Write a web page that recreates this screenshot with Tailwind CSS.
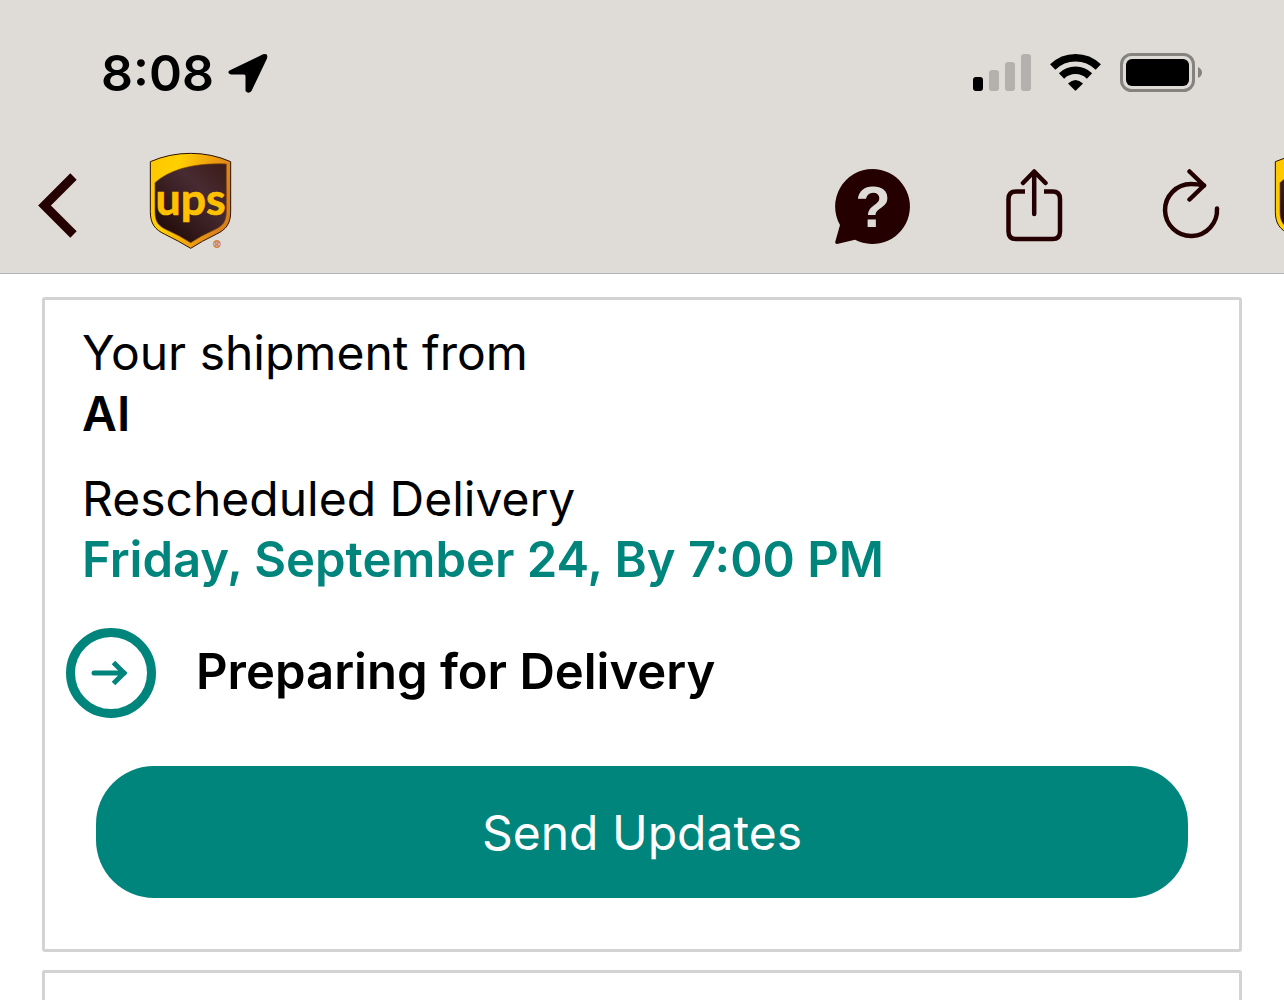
<!DOCTYPE html>
<html lang="en">
<head>
    <meta charset="UTF-8">
    <meta name="viewport" content="width=device-width, initial-scale=1.0">
    <title>UPS Tracking</title>
    <script src="https://cdn.jsdelivr.net/npm/@tailwindcss/browser@4"></script>
</head>
<body class="bg-white text-black font-['Inter',sans-serif] text-[48px] leading-[61px] overflow-x-hidden">
    <header class="bg-[#dfdcd8] border-b border-[#b2b4b8] overflow-hidden">
        <!-- status bar -->
        <div class="flex items-center justify-between h-[146px] pl-[101px] pr-[82px]">
            <div class="flex items-center gap-[13px]">
                <span class="text-[50px] font-semibold">8:08</span>
                <svg class="w-[42px] h-[42px]" viewBox="0 0 42 42" aria-hidden="true">
                    <path d="M2.500 18.500 L36 2.300 Q41.500 0.500 40 6.500 L24.500 39 Q21.500 42.500 18.500 39 V24 Q18.500 22.500 17 22.500 H4 Q-0.500 21 2.500 18.500Z"/>
                </svg>
            </div>
            <div class="flex items-center gap-[19px]">
                <svg class="w-[58px] h-[40px]" viewBox="0 0 58 40" aria-hidden="true">
                    <rect x="0" y="24" width="10" height="14" rx="3"/>
                    <g fill="#b3b0ad">
                        <rect x="16" y="17" width="10" height="21" rx="3"/>
                        <rect x="32" y="9" width="10" height="29" rx="3"/>
                        <rect x="48" y="1" width="10" height="37" rx="3"/>
                    </g>
                </svg>
                <svg class="w-[51px] h-[40px]" viewBox="0 0 51 40" aria-hidden="true">
                    <g fill="none" stroke="#000" stroke-width="7.500">
                        <path d="M2.700 14 A32.500 32.500 0 0 1 48.300 14"/>
                        <path d="M11.500 23 A20 20 0 0 1 39.500 23"/>
                    </g>
                    <path d="M18 30.500 Q25.500 23.500 33 30.500 L26.200 37.300 Q25.500 38 24.800 37.300Z"/>
                </svg>
                <svg class="w-[82px] h-10" viewBox="0 1 82 40" aria-hidden="true">
                    <rect x="1.500" y="2.500" width="72" height="36" rx="10" fill="none" stroke="#858380" stroke-width="3"/>
                    <rect x="6" y="7" width="63" height="27" rx="6"/>
                    <path d="M78 15 Q82 17 82 20.500 Q82 24 78 26Z" fill="#858380"/>
                </svg>
            </div>
        </div>

        <!-- toolbar -->
        <nav class="flex justify-between h-[127px] pl-[37px]">
            <div class="flex">
                <button type="button" aria-label="Back" class="w-[40px] h-[120px]">
                    <svg class="w-[40px] h-[66px]" viewBox="0 0 40 66" fill="none" stroke="#240000" stroke-width="9">
                        <path d="M36.500 3.500 L7.500 32.500 L36.500 61.500"/>
                    </svg>
                </button>
                <a href="#" aria-label="UPS home" class="ml-[72px] mt-[6px] h-[98px]">
                    <svg class="w-[84px] h-[98px]" viewBox="387 36 252 294">
                        <defs>
                            <linearGradient id="gold" x1="0" y1="0" x2="1" y2="0.300">
                                <stop offset="0" stop-color="#ffc600"/>
                                <stop offset="0.350" stop-color="#ffd000"/>
                                <stop offset="0.750" stop-color="#ee9c10"/>
                                <stop offset="1" stop-color="#d97f1c"/>
                            </linearGradient>
                            <linearGradient id="brown" x1="1" y1="0" x2="0.200" y2="0.900">
                                <stop offset="0" stop-color="#3d1c18"/>
                                <stop offset="0.400" stop-color="#472b32"/>
                                <stop offset="1" stop-color="#250d0b"/>
                            </linearGradient>
                        </defs>
                        <path d="M391 65 Q448 40 512 40 Q575 40 632 65 V215 C632 252 617 269 590 282 Q544 304 512 325 Q478 304 433 282 C406 269 391 252 391 215Z" fill="url(#gold)" stroke="#2a1005" stroke-width="3"/>
                        <path d="M405 128 C450 88 525 68 619 72 V215 C619 248 605 259 582 270 Q542 288 512 308 Q481 288 441 270 C418 259 405 248 405 215Z" fill="url(#brown)" stroke="#7a4a0c" stroke-width="2"/>
                        <text x="512" y="226" text-anchor="middle" fill="#ffc000" stroke="#ffc000" stroke-width="2" class="font-['Lato',sans-serif] font-bold text-[134px]">ups</text>
                        <text x="591" y="323" text-anchor="middle" fill="#cf7a26" stroke="#cf7a26" class="font-['Liberation_Sans',sans-serif] font-bold text-[30px]">®</text>
                    </svg>
                </a>
            </div>
            <div class="flex w-[449px] shrink-0 overflow-hidden">
                <button type="button" aria-label="Help" class="w-[76px] shrink-0 h-[120px]">
                    <svg class="w-[76px] h-[86px]" viewBox="0 -6 76 86">
                        <path d="M37.500 0 A37.500 37.500 0 1 1 20 70.700 L2 75 Q0 75 0.200 73 L5 56 A37.500 37.500 0 0 1 37.500 0Z" fill="#240000"/>
                        <text x="38" y="58" text-anchor="middle" fill="#dfdcd8" class="font-['Liberation_Sans',sans-serif] font-bold text-[58px]">?</text>
                    </svg>
                </button>
                <button type="button" aria-label="Share" class="w-[58px] shrink-0 h-[120px] ml-[95px]">
                    <svg class="w-[58px] h-[74px]" viewBox="0 0 58 74" fill="none" stroke="#240000" stroke-width="4.500">
                        <path d="M19 22.500 H10 Q2.500 22.500 2.500 30 V62.500 Q2.500 70 10 70 H46.500 Q54 70 54 62.500 V30 Q54 22.500 46.500 22.500 H38"/>
                        <path d="M28.200 45 V3 M17 14 L28.200 2.500 L39.500 14" stroke-linecap="round" stroke-linejoin="round"/>
                    </svg>
                </button>
                <button type="button" aria-label="Refresh" class="w-[58px] shrink-0 h-[120px] ml-[98px]">
                    <svg class="w-[58px] h-[74px]" viewBox="0 0 58 74" fill="none" stroke="#240000" stroke-width="4.500" stroke-linecap="round">
                        <path d="M55 39.500 A26 26 0 1 1 29 15 Q36 15 42 16.500"/>
                        <path d="M27.500 2.500 L42 16.500 L27.500 30.500" stroke-linejoin="round"/>
                    </svg>
                </button>
                <a href="#" aria-label="UPS menu" class="ml-[54px] mt-[6px] shrink-0 h-[98px]">
                    <svg class="w-[84px] h-[98px]" viewBox="387 36 252 294">
                        <path d="M391 65 Q448 40 512 40 Q575 40 632 65 V215 C632 252 617 269 590 282 Q544 304 512 325 Q478 304 433 282 C406 269 391 252 391 215Z" fill="url(#gold)" stroke="#2a1005" stroke-width="3"/>
                        <path d="M405 128 C450 88 525 68 619 72 V215 C619 248 605 259 582 270 Q542 288 512 308 Q481 288 441 270 C418 259 405 248 405 215Z" fill="url(#brown)" stroke="#7a4a0c" stroke-width="2"/>
                    </svg>
                </a>
            </div>
        </nav>
    </header>

    <main class="flex flex-col gap-[18px] px-[42px] pt-[23px]">
        <section class="border-[3px] border-[#d3d3d3] rounded-[3px] pt-[22px] pb-[51px]">
            <div class="pl-[37px]">
                <p>Your shipment from</p>
                <p class="font-semibold">AI</p>
                <p class="mt-6">Rescheduled Delivery</p>
                <p class="font-semibold text-[49px] text-[#00857c]">Friday, September 24, By 7:00 PM</p>
            </div>
            <div class="flex items-center gap-10 mt-[38px] pl-[21px]">
                <svg class="w-[90px] h-[90px]" viewBox="0 0 90 90" fill="none" stroke="#00857c" aria-hidden="true">
                    <circle cx="45" cy="45" r="40.500" stroke-width="9"/>
                    <path d="M28 45 H58" stroke-width="5" stroke-linecap="round"/>
                    <path d="M47.500 34.500 L58 45 L47.500 55.500" stroke-width="5"/>
                </svg>
                <h1 class="font-semibold text-[49px] pb-1">Preparing for Delivery</h1>
            </div>
            <div class="px-[51px] mt-12">
                <button type="button" class="w-full h-[132px] rounded-[58px] bg-[#00857c] text-white">Send Updates</button>
            </div>
        </section>
        <section class="border-[3px] border-b-0 border-[#d3d3d3] rounded-t-[3px] h-[30px]"></section>
    </main>
</body>
</html>
